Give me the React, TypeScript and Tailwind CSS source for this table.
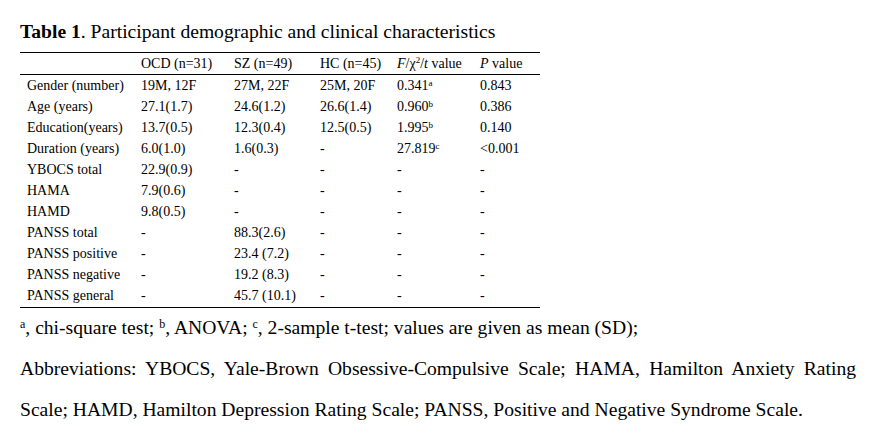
const rows: string[][] = [
  ["Gender (number)", "19M, 12F", "27M, 22F", "25M, 20F", "0.341|a", "0.843"],
  ["Age (years)", "27.1(1.7)", "24.6(1.2)", "26.6(1.4)", "0.960|b", "0.386"],
  ["Education(years)", "13.7(0.5)", "12.3(0.4)", "12.5(0.5)", "1.995|b", "0.140"],
  ["Duration (years)", "6.0(1.0)", "1.6(0.3)", "-", "27.819|c", "<0.001"],
  ["YBOCS total", "22.9(0.9)", "-", "-", "-", "-"],
  ["HAMA", "7.9(0.6)", "-", "-", "-", "-"],
  ["HAMD", "9.8(0.5)", "-", "-", "-", "-"],
  ["PANSS total", "-", "88.3(2.6)", "-", "-", "-"],
  ["PANSS positive", "-", "23.4 (7.2)", "-", "-", "-"],
  ["PANSS negative", "-", "19.2 (8.3)", "-", "-", "-"],
  ["PANSS general", "-", "45.7 (10.1)", "-", "-", "-"],
];

const widths = ["w-[114px]", "w-[93px]", "w-[86px]", "w-[77px]", "w-[83px]", "w-[67px]"];

const Cell = ({ text }: { text: string }) => {
  // value|sup -> superscript letter
  const [val, sup] = text.split("|");
  return (
    <>
      {val}
      {sup && <span className="text-[9px] relative top-[-4px] leading-none">{sup}</span>}
    </>
  );
};

const Sup = ({ c }: { c: string }) => (
  <span className="text-[12px] relative top-[-6px] leading-none">{c}</span>
);

const App = () => {
  return (
    <div className="w-[872px] h-[437px] bg-white text-black font-['Liberation_Serif','Times_New_Roman',serif] overflow-hidden">
      <div className="pl-[20px] pt-[21px]">
        <h1 className="text-[19.6px] leading-[22px] h-[31px]">
          <span className="font-bold">Table 1</span>. Participant demographic and clinical characteristics
        </h1>

        <table className="w-[520px] text-[14px] border-collapse table-fixed">
          <thead>
            <tr className="h-[22px] border-t border-b border-black">
              <th className={`${widths[0]} font-normal text-left pl-[7px]`}></th>
              <th className={`${widths[1]} font-normal text-left pl-[7px]`}>OCD (n=31)</th>
              <th className={`${widths[2]} font-normal text-left pl-[7px]`}>SZ (n=49)</th>
              <th className={`${widths[3]} font-normal text-left pl-[7px]`}>HC (n=45)</th>
              <th className={`${widths[4]} font-normal text-left pl-[7px] whitespace-nowrap`}>
                <i>F</i>/χ<span className="text-[9px] relative top-[-5px] leading-none">2</span>/<i>t</i> value
              </th>
              <th className={`${widths[5]} font-normal text-left pl-[7px]`}>
                <i>P</i> value
              </th>
            </tr>
          </thead>
          <tbody>
            {rows.map((r, i) => (
              <tr
                key={i}
                className={i === rows.length - 1 ? "h-[22px] border-b border-black align-bottom" : "h-[20.7px]"}
              >
                {r.map((c, j) => (
                  <td key={j} className={`pl-[7px] whitespace-nowrap ${i === rows.length - 1 ? "pb-[1px]" : ""}`}>
                    <Cell text={c} />
                  </td>
                ))}
              </tr>
            ))}
          </tbody>
        </table>

        <div className="w-[836px] text-[19.6px] leading-[41px] text-justify -mt-[1px]">
          <p>
            <Sup c="a" />, chi-square test; <Sup c="b" />, ANOVA; <Sup c="c" />, 2-sample t-test; values are
            given as mean (SD);
          </p>
          <p>
            Abbreviations: YBOCS, Yale-Brown Obsessive-Compulsive Scale; HAMA, Hamilton Anxiety Rating Scale;
            HAMD, Hamilton Depression Rating Scale; PANSS, Positive and Negative Syndrome Scale.
          </p>
        </div>
      </div>
    </div>
  );
};

export default App;
